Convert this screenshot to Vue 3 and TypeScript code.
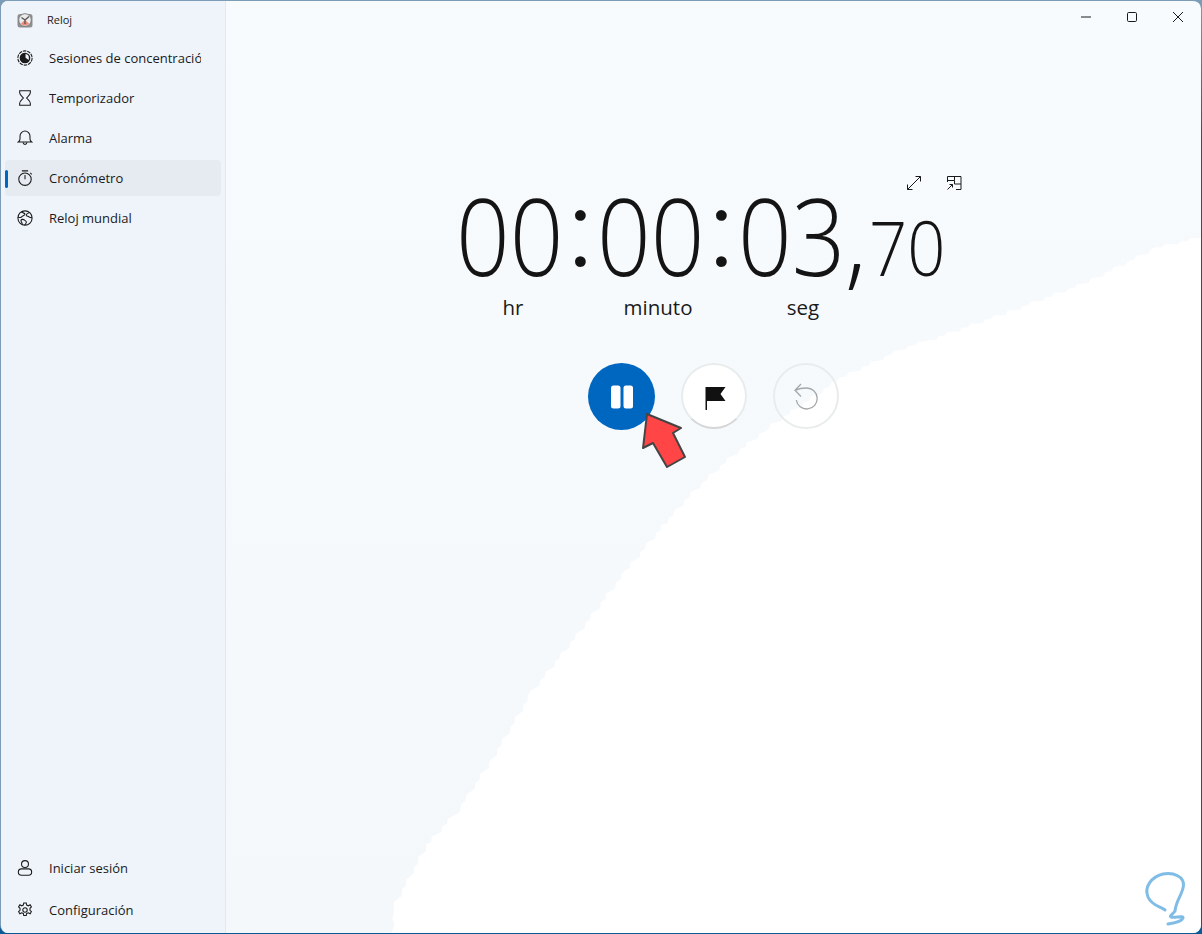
<script setup lang="ts">
// nav entries, icons are drawn in the template by key
const topItems = [
  { key: 'focus', label: 'Sesiones de concentración' },
  { key: 'timer', label: 'Temporizador' },
  { key: 'alarm', label: 'Alarma' },
  { key: 'watch', label: 'Cronómetro', active: true },
  { key: 'world', label: 'Reloj mundial' },
];
const bottomItems = [
  { key: 'user', label: 'Iniciar sesión' },
  { key: 'gear', label: 'Configuración' },
];

// edge of the white wallpaper shape behind the stopwatch
const edge: [number, number][] = [
  [393, 934], [393, 908], [427, 845], [459, 809], [493, 758], [532, 692], [574, 639], [626, 571],
  [666, 522], [695, 490], [729, 459], [768, 428], [841, 378], [904, 348], [930, 340],
  [1009, 312], [1088, 282], [1156, 248], [1202, 237],
];
const jagged: string[] = [];
edge.forEach((p, i) => {
  if (i === edge.length - 1) { jagged.push(p.join(',')); return; }
  const q = edge[i + 1];
  const steps = Math.max(2, Math.round(Math.hypot(q[0] - p[0], q[1] - p[1]) / 5));
  for (let s = 0; s < steps; s++) {
    const t = s / steps;
    const w = ((s * 7 + i * 3) % 5) - 2;
    jagged.push(`${(p[0] + (q[0] - p[0]) * t + w * 0.7).toFixed(1)},${(p[1] + (q[1] - p[1]) * t + w * 0.7).toFixed(1)}`);
  }
});
const shape = [...jagged, '1202,934'].join(' ');
</script>

<template>
  <div class="window">
    <svg class="wallpaper" width="1202" height="934" viewBox="0 0 1202 934">
      <polygon :points="shape" fill="#fff" />
    </svg>

    <aside class="sidebar">
      <div class="app-title">
        <svg width="16" height="16" viewBox="0 0 16 16">
          <rect x="0.5" y="2" width="15" height="13.500" rx="2.500" fill="#8f8f8f" />
          <circle cx="8" cy="8" r="6.300" fill="#ecebeb" stroke="#6d6d6d" stroke-width="0.8" />
          <path d="M4 11.500A5 5 0 0 0 12 11.500L8 8z" fill="#ef8a78" />
          <path d="M8 8V12M8 8L4.500 5.500M8 8l4-3.500" stroke="#555" stroke-width="1.300" fill="none" />
        </svg>
        <span>Reloj</span>
      </div>

      <nav class="nav">
        <a v-for="item in topItems" :key="item.key" class="nav-item" :class="{ active: item.active }">
          <svg class="nav-icon" width="16" height="16" viewBox="0 0 18 18" fill="none" stroke="#1b1b1b" stroke-width="1.200">
            <template v-if="item.key === 'focus'">
              <circle cx="9" cy="9" r="8" stroke-dasharray="4 1" />
              <circle cx="9" cy="9" r="5.200" stroke-width="1.600" />
              <path d="M9 4A5 5 0 1 0 13 12L9 9Z" fill="#1b1b1b" />
            </template>
            <template v-else-if="item.key === 'timer'">
              <path d="M3 .8h12v2.300c0 2.200-2.300 3.800-4.300 5.900 2 2.100 4.300 3.700 4.300 5.900v2.300H3v-2.300c0-2.200 2.300-3.800 4.300-5.900C5.300 6.900 3 5.300 3 3.100z" />
            </template>
            <template v-else-if="item.key === 'alarm'">
              <path d="M1.500 13.500h15c-1.300-1-1.900-2.200-1.900-3.700V6.800a5.600 5.600 0 0 0-11.200 0v3c0 1.500-.6 2.700-1.900 3.700z" />
              <path d="M6.800 14c.2 1.300 1.100 2.200 2.200 2.200s2-.9 2.200-2.200" />
            </template>
            <template v-else-if="item.key === 'watch'">
              <circle cx="9" cy="10.300" r="7" />
              <path d="M5.500 1h7M9 10.300V5.600M15 3.300l1.500 1.500" />
            </template>
            <template v-else>
              <circle cx="9" cy="9" r="8" />
              <path d="M5 2c1 1.500 3.500 1 4 2.500s-2.500 1.500-3.500 3-3 .8-4.400.5M14 2.800c-1.500 1-3.500 1-3.500 3 0 1.500 2 1 3 2s2.500 1 3.400 1M6 16.500c0-2.500-2-3.500-1.500-5s3-1 4 0 2.500 1 2 2.500-1 2.300-2 2.800" />
            </template>
          </svg>
          <span class="nav-label">{{ item.label }}</span>
        </a>
      </nav>

      <div class="nav nav-bottom">
        <a v-for="item in bottomItems" :key="item.key" class="nav-item">
          <svg class="nav-icon" width="16" height="16" viewBox="0 0 18 18" fill="none" stroke="#1b1b1b" stroke-width="1.200">
            <template v-if="item.key === 'user'">
              <circle cx="9" cy="4.600" r="3.900" />
              <rect x="1.500" y="10" width="15" height="7.200" rx="3.600" />
            </template>
            <template v-else>
              <circle cx="9" cy="9" r="2.500" />
              <path d="M7.600 1.200h2.800l.5 2.300 1.900.8 2-1.200 1.400 2.400-1.600 1.600v2.200l1.600 1.600-1.400 2.400-2-1.200-1.900.8-.5 2.300H7.600l-.5-2.300-1.900-.8-2 1.200-1.400-2.400 1.600-1.600V7.100L1.800 5.500l1.400-2.400 2 1.200 1.900-.8z" />
            </template>
          </svg>
          <span class="nav-label">{{ item.label }}</span>
        </a>
      </div>
    </aside>

    <main class="main">
      <div class="titlebar">
        <button class="win-btn">
          <svg width="12" height="12" viewBox="0 0 12 12"><path d="M1 6h10" stroke="#1a1a1a" /></svg>
        </button>
        <button class="win-btn">
          <svg width="12" height="12" viewBox="0 0 12 12"><rect x="1.500" y="1.500" width="9" height="9" rx="1.200" fill="none" stroke="#1a1a1a" /></svg>
        </button>
        <button class="win-btn">
          <svg width="12" height="12" viewBox="0 0 12 12"><path d="M1 1l10 10M11 1L1 11" stroke="#1a1a1a" fill="none" /></svg>
        </button>
      </div>

      <div class="view-tools">
        <svg width="16" height="16" viewBox="0 0 16 16" fill="none" stroke="#1a1a1a">
          <path d="M1.500 9.500v5h5M14.500 6.500v-5h-5M1.500 14.500l13-13" />
        </svg>
        <svg width="16" height="16" viewBox="0 0 16 16" fill="none" stroke="#1a1a1a">
          <path d="M1.500 7V1.500H15v13h-5M1.500 5.500H8.500V1.500M8.500 5.500V9H15" />
          <path d="M1.500 14.500l5-5M3.500 9.500h3v3" />
        </svg>
      </div>

      <div class="clock">
        <span class="group">00</span><span class="sep">:</span><span class="group">00</span><span class="sep">:</span><span class="group">03</span><span class="comma">,</span><span class="fraction">70</span>
      </div>

      <div class="units">
        <span>hr</span>
        <span>minuto</span>
        <span>seg</span>
      </div>

      <div class="controls">
        <button class="round primary">
          <svg width="24" height="24" viewBox="0 0 24 24"><rect x="1" y="0.500" width="9.500" height="23" rx="2.500" fill="#fff" /><rect x="13.500" y="0.500" width="9.500" height="23" rx="2.500" fill="#fff" /></svg>
        </button>
        <button class="round flag">
          <svg width="21" height="24" viewBox="0 0 21 24"><path d="M.5 1h20l-5 7 5 7H2v9H.5z" fill="#111" /></svg>
        </button>
        <button class="round reset">
          <svg width="24" height="27" viewBox="0 0 24 27" fill="none" stroke="#a5a7a9" stroke-width="1.300"><path d="M7 1L1 7.300l6 6.200M1 7.300Q6 5 12.500 5A10.500 10.500 0 1 1 2.300 17" /></svg>
        </button>
      </div>
    </main>

    <!-- annotation arrow and watermark sit over the app -->
    <svg class="pointer" width="60" height="70" viewBox="0 0 60 70">
      <path d="M7 4L41 18 33 23 45 47 27 57 13 33 3 38z" fill="#ff4545" stroke="#444" stroke-width="2" stroke-linejoin="round" />
    </svg>
    <svg class="mark" width="50" height="60" viewBox="0 0 50 60" fill="none" stroke="#7fbce6" stroke-width="3" stroke-linecap="round">
      <path d="M23 40C18 36 10 36 6 27 2 17 9 7 21 4 32 2 42 7 41.500 15 41 24 34 30 33 41 31 44 27 46 29 47 33 48 42 45 41 48 40 51 33 53 26 54" />
    </svg>
  </div>
</template>

<style>
html {
  min-height: 100%;
  background: linear-gradient(#7d9db6, #0c5a94 15%);
}
body { margin: 0; }
</style>

<style scoped>
.window {
  position: relative;
  width: 1200px;
  height: 932px;
  display: flex;
  overflow: hidden;
  background: linear-gradient(#f8fbfe, #f4f8fb);
  border-top: 1px solid #7d9db6;
  border-left: 1px solid #7d9db6;
  border-radius: 8px;
  font-family: "Open Sans", "Noto Sans", sans-serif;
  color: #1a1a1a;
}
.wallpaper {
  position: absolute;
  left: -1px;
  top: -1px;
}
.sidebar {
  position: relative;
  width: 225px;
  flex: none;
  display: flex;
  flex-direction: column;
  padding: 0 4px 5px;
  box-sizing: border-box;
  background: #eef4fa;
  border-right: 1px solid #e4e9ef;
}
.app-title {
  height: 39px;
  box-sizing: border-box;
  padding: 0 0 2px 12px;
  display: flex;
  align-items: center;
  gap: 14px;
  font-size: 11px;
}
.nav {
  display: flex;
  flex-direction: column;
  gap: 4px;
}
.nav-bottom {
  margin-top: auto;
  gap: 6px;
}
.nav-item {
  position: relative;
  height: 36px;
  display: flex;
  align-items: center;
  padding-left: 12px;
  border-radius: 4px;
  font-size: 13px;
}
.nav-item.active {
  background: #e5ebf1;
}
.nav-item.active::before {
  content: "";
  position: absolute;
  left: 0;
  top: 10px;
  width: 3px;
  height: 18px;
  border-radius: 2px;
  background: #0067c0;
}
.nav-icon {
  flex: none;
  margin-right: 16px;
}
.nav-label {
  width: 152px;
  white-space: nowrap;
  overflow: hidden;
}
.main {
  position: relative;
  flex: 1;
  display: flex;
  flex-direction: column;
  align-items: center;
}
.titlebar {
  align-self: flex-end;
  display: flex;
}
.win-btn {
  width: 46px;
  height: 32px;
  padding: 0;
  border: 0;
  background: transparent;
  display: flex;
  align-items: center;
  justify-content: center;
}
.view-tools {
  align-self: flex-end;
  display: flex;
  gap: 24px;
  margin: 142px 239px 0 0;
}
.clock {
  height: 109px;
  display: flex;
  align-items: baseline;
  margin: -9px 27px 0 0;
  font-family: "Open Sans", sans-serif;
  font-weight: 300;
  font-size: 108px;
  line-height: 100px;
  color: #141414;
}
.group {
  display: inline-block;
  width: 114px;
  font-size: 107px;
  transform: scaleX(0.88);
  transform-origin: left;
  margin-left: 3px;
  margin-right: -3px;
}
.sep {
  width: 27px;
  text-align: center;
  font-family: Lato, sans-serif;
  font-size: 116px;
  transform: translateY(-10px);
}
.comma {
  width: 24px;
  margin-left: -4px;
  font-size: 105px;
}
.fraction {
  display: inline-block;
  width: 79px;
  font-size: 76px;
  transform: scaleX(0.88);
  transform-origin: left;
}
.units {
  display: grid;
  grid-template-columns: repeat(3, 145px);
  justify-items: center;
  margin: 2px 111px 0 0;
  font-size: 20.500px;
  line-height: 28px;
}
.controls {
  display: flex;
  gap: 26px;
  margin: 42px 0 0;
}
.round {
  width: 66px;
  height: 66px;
  padding: 0;
  border-radius: 50%;
  box-sizing: border-box;
  display: flex;
  align-items: center;
  justify-content: center;
  background: transparent;
  border: 2px solid #e9eced;
}
.primary {
  width: 67px;
  height: 67px;
  background: #0067c0;
  border: 0;
}
.flag {
  background: #fff;
  border-bottom-color: #d4d6d8;
}
.flag svg {
  margin: 4px 0 0 2px;
}
.pointer {
  position: absolute;
  left: 639px;
  top: 409px;
}
.mark {
  position: absolute;
  left: 1141px;
  top: 869px;
}
</style>
